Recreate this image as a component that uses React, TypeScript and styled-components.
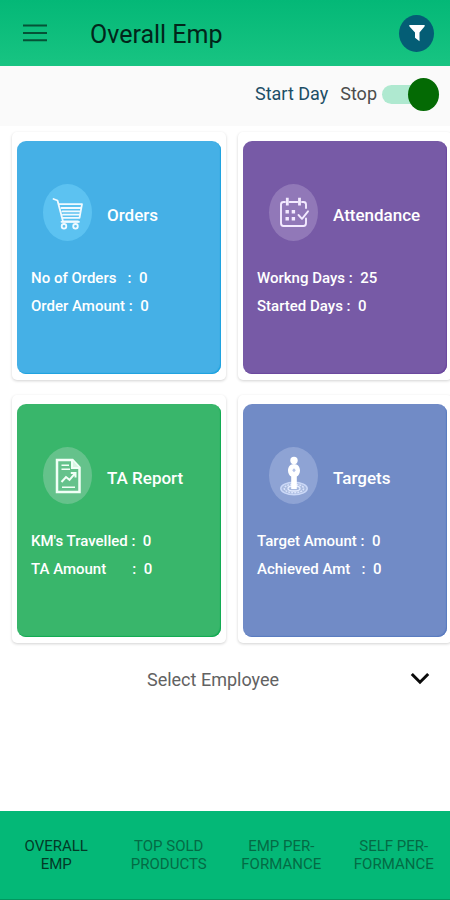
import React from "react";
import styled, { createGlobalStyle } from "styled-components";

const GlobalStyle = createGlobalStyle`
  *, *::before, *::after { box-sizing: border-box; }
  body {
    margin: 0;
    background: #ffffff;
    font-family: Roboto, "Liberation Sans", sans-serif;
  }
  button, select { font-family: inherit; }
`;

const Screen = styled.div`
  display: flex;
  flex-direction: column;
  min-height: 100vh;
  overflow: hidden;
`;

const Header = styled.header`
  display: flex;
  align-items: center;
  height: 66px;
  padding: 0 16px 0 20px;
  background: linear-gradient(#04b877, #18c482);
`;

const IconButton = styled.button`
  display: flex;
  padding: 0;
  border: 0;
  background: none;
  cursor: pointer;
`;

const FilterButton = styled(IconButton)`
  align-items: center;
  justify-content: center;
  width: 35px;
  height: 37px;
  border-radius: 50%;
  background: #045d75;
`;

const Title = styled.h1`
  flex: 1;
  margin: 4px 0 0 40px;
  font-size: 25px;
  line-height: 32px;
  font-weight: 400;
  color: #02251a;
`;

const DayBar = styled.section`
  display: flex;
  align-items: center;
  justify-content: flex-end;
  height: 60px;
  padding: 0 11px 4px 0;
  background: #fafafa;
`;

const StartButton = styled.button`
  margin: 0 12px 0 0;
  padding: 0;
  border: 0;
  background: none;
  font-size: 18px;
  line-height: 24px;
  color: #1c4e66;
  cursor: pointer;
`;

const StopLabel = styled.label`
  display: flex;
  align-items: center;
  gap: 5px;
  font-size: 18px;
  line-height: 24px;
  color: #4c4c4c;
`;

const Switch = styled.input`
  appearance: none;
  display: flex;
  align-items: center;
  justify-content: flex-end;
  width: 57px;
  height: 19px;
  margin: 0;
  background: #afe9d0;
  border-radius: 10px;
  cursor: pointer;

  &::before {
    content: "";
    flex: none;
    width: 31px;
    height: 33px;
    border-radius: 50%;
    background: #046a04;
  }
  &:not(:checked) { justify-content: flex-start; }
`;

const CardGrid = styled.main`
  display: grid;
  grid-template-columns: 1fr 1fr;
  gap: 15px 12px;
  margin: 6px -2px 0 12px;
`;

const CardFrame = styled.article`
  padding: 9px 5px 6px;
  border-radius: 5px;
  background: #ffffff;
  box-shadow: 0 1px 3px rgba(0, 0, 0, 0.18);
`;

const CardBody = styled.div<{ $color: string; $edge: string }>`
  min-height: 233px;
  padding: 43px 14px 0;
  border-radius: 9px;
  background: ${(p) => p.$color};
  box-shadow: inset -1px -1px 1px ${(p) => p.$edge};
  color: #ffffff;
`;

const CardHead = styled.div`
  display: flex;
  align-items: center;
  gap: 15px;
  padding-left: 12px;
`;

const IconDisc = styled.span<{ $color: string }>`
  display: flex;
  align-items: center;
  justify-content: center;
  width: 49px;
  height: 57px;
  border-radius: 50%;
  background: ${(p) => p.$color};
`;

const CardTitle = styled.h2`
  margin: 4px 0 0;
  font-size: 17px;
  line-height: 24px;
  font-weight: 500;
`;

const Stats = styled.div`
  margin-top: 23px;
`;

const Stat = styled.p`
  margin: 0;
  font-size: 15px;
  line-height: 28px;
  font-weight: 500;
  white-space: pre;
`;

const PickerRow = styled.div`
  display: grid;
  align-items: center;
  margin: 15px 20px 0 10px;

  > * { grid-area: 1 / 1; }
  > svg { justify-self: end; pointer-events: none; }
`;

const Picker = styled.select`
  appearance: none;
  width: 100%;
  height: 42px;
  padding: 0 14px 0 0;
  border: 0;
  background: transparent;
  font-size: 18px;
  color: #626262;
  text-align: center;
  text-align-last: center;
`;

const TabBar = styled.nav`
  display: grid;
  grid-template-columns: repeat(4, 1fr);
  height: 89px;
  margin-top: auto;
  background: #04b877;
  border-bottom: 1px solid #03965f;
`;

const Tab = styled.button<{ $active?: boolean }>`
  padding: 0;
  border: 0;
  background: none;
  font-size: 15px;
  line-height: 18px;
  font-weight: 400;
  color: ${(p) => (p.$active ? "#033a27" : "#046b45")};
  white-space: pre-line;
  cursor: pointer;
`;

const MenuIcon = () => (
  <svg width="30" height="24" viewBox="0 0 30 24" stroke="#055236" strokeWidth="2" aria-hidden="true">
    <path d="M3 4.5H27M3 12H27M3 19.2H27" />
  </svg>
);

const FilterIcon = () => (
  <svg width="18" height="18" viewBox="0 0 18 18" fill="#ffffff" aria-hidden="true">
    <path d="M1.6 1H16.4Q17.2 1.5 16.5 2.4L11.5 8.5V17.2L7 13.8V8.5L1.5 2.4Q.8 1.5 1.6 1Z" />
  </svg>
);

const CartIcon = () => (
  <svg width="32" height="36" viewBox="0 0 32 36" fill="none" stroke="#f1faff" strokeWidth="1.8" strokeLinecap="round" strokeLinejoin="round" aria-hidden="true">
    <path d="M1.5 4L5.5 5.5L11 26.5M7.5 9.2H30L27.5 22.8H10M9.5 13H29M10.5 16.4H27.5M11 19.7H27M11 26.5H26" />
    <path d="M9.5 26.8H27" />
    <circle cx="12" cy="31.3" r="2.3" />
    <circle cx="23.5" cy="31.3" r="2.3" />
  </svg>
);

const CalendarIcon = () => (
  <svg width="32" height="36" viewBox="0 0 32 36" fill="none" stroke="#f3eaff" strokeWidth="1.9" strokeLinecap="round" strokeLinejoin="round" aria-hidden="true">
    <path d="M7 7H5.5Q3 7 3 9.5V28Q3 31 5.5 31H25.5Q28 31 28 28V23.5M28 13V9.5Q28 7 25.5 7H24M11.5 7H19.5" />
    <path d="M9.3 2.8V10.5M21.5 2.8V10.5" strokeWidth="2.8" strokeLinecap="butt" />
    <path d="M20.5 20L24 23.8L30 16.3" />
    <path fill="#f3eaff" stroke="none" d="M7.5 15h3.4v3.4h-3.4zM13.7 15h3.4v3.4h-3.4zM7.5 22h3.4v3.4h-3.4zM13.7 22h3.4v3.4h-3.4z" />
  </svg>
);

const ReportIcon = () => (
  <svg width="32" height="38" viewBox="0 0 32 38" fill="none" stroke="#f1fff6" strokeWidth="2" aria-hidden="true">
    <path d="M5 3H20.5L27.5 10.5V35H5Z" strokeWidth="2.5" />
    <path d="M20 3V11H27.5" fill="#d9f6e4" />
    <path d="M9.5 8.2H17M9.5 12.3H18M10 30.2H23" strokeWidth="1.6" />
    <path d="M9.5 25L14 20L17.5 22.8L23 16.3M18.8 16H23.5V20.5" />
  </svg>
);

const TargetIcon = () => (
  <svg width="32" height="42" viewBox="0 0 32 42" fill="none" aria-hidden="true">
    <ellipse cx="16" cy="33.5" rx="13.2" ry="6.2" fill="#a9badf" stroke="#cbd8f7" strokeWidth="1.5" />
    <ellipse cx="16" cy="33.5" rx="9.7" ry="4.2" stroke="#dce5fc" strokeWidth="1.5" strokeDasharray="2 1" />
    <ellipse cx="16" cy="33.5" rx="6" ry="2.5" stroke="#e6edff" strokeWidth="1.3" />
    <circle cx="16" cy="5.5" r="3.7" fill="#ffffff" />
    <path d="M16 9C12.4 9 10 11.8 10 15.5C10 18.5 11.5 20.8 13.2 21.5V34H18.8V21.5C20.5 20.8 22 18.5 22 15.5C22 11.8 19.6 9 16 9Z" fill="#ffffff" />
    <path d="M16 13.2L17.8 15.2L16 17.2L14.2 15.2Z" fill="#b5c3e8" />
  </svg>
);

const ChevronIcon = () => (
  <svg width="20" height="14" viewBox="0 0 20 14" fill="none" stroke="#0a0a0a" strokeWidth="3" aria-hidden="true">
    <path d="M1.8 2L10 10.2L18.2 2" />
  </svg>
);

const cards = [
  { title: "Orders", color: "#45b0e6", edge: "#1ca2df", disc: "#5cc2f1", Icon: CartIcon, stats: ["No of Orders   :  0", "Order Amount :  0"] },
  { title: "Attendance", color: "#775aa6", edge: "#6b479f", disc: "#9178b8", Icon: CalendarIcon, stats: ["Workng Days :  25", "Started Days :  0"] },
  { title: "TA Report", color: "#39b66b", edge: "#10aa51", disc: "#65c28b", Icon: ReportIcon, stats: ["KM's Travelled :  0", "TA Amount       :  0"] },
  { title: "Targets", color: "#718bc6", edge: "#587abf", disc: "#8ea3d4", Icon: TargetIcon, stats: ["Target Amount :  0", "Achieved Amt   :  0"] },
];

const tabs = ["OVERALL\nEMP", "TOP SOLD\nPRODUCTS", "EMP PER-\nFORMANCE", "SELF PER-\nFORMANCE"];

export default function App() {
  const [active, setActive] = React.useState(0);

  return (
    <Screen>
      <GlobalStyle />
      <Header>
        <IconButton type="button" aria-label="Menu"><MenuIcon /></IconButton>
        <Title>Overall Emp</Title>
        <FilterButton type="button" aria-label="Filter"><FilterIcon /></FilterButton>
      </Header>
      <DayBar>
        <StartButton type="button">Start Day</StartButton>
        <StopLabel htmlFor="day-switch">
          Stop
          <Switch id="day-switch" type="checkbox" role="switch" defaultChecked />
        </StopLabel>
      </DayBar>
      <CardGrid>
        {cards.map(({ title, color, edge, disc, Icon, stats }) => (
          <CardFrame key={title}>
            <CardBody $color={color} $edge={edge}>
              <CardHead>
                <IconDisc $color={disc}><Icon /></IconDisc>
                <CardTitle>{title}</CardTitle>
              </CardHead>
              <Stats>
                {stats.map((line) => <Stat key={line}>{line}</Stat>)}
              </Stats>
            </CardBody>
          </CardFrame>
        ))}
      </CardGrid>
      <PickerRow>
        <Picker aria-label="Select Employee" defaultValue="">
          <option value="">Select Employee</option>
        </Picker>
        <ChevronIcon />
      </PickerRow>
      <TabBar>
        {tabs.map((label, i) => (
          <Tab key={label} type="button" $active={i === active} onClick={() => setActive(i)}>
            {label}
          </Tab>
        ))}
      </TabBar>
    </Screen>
  );
}
